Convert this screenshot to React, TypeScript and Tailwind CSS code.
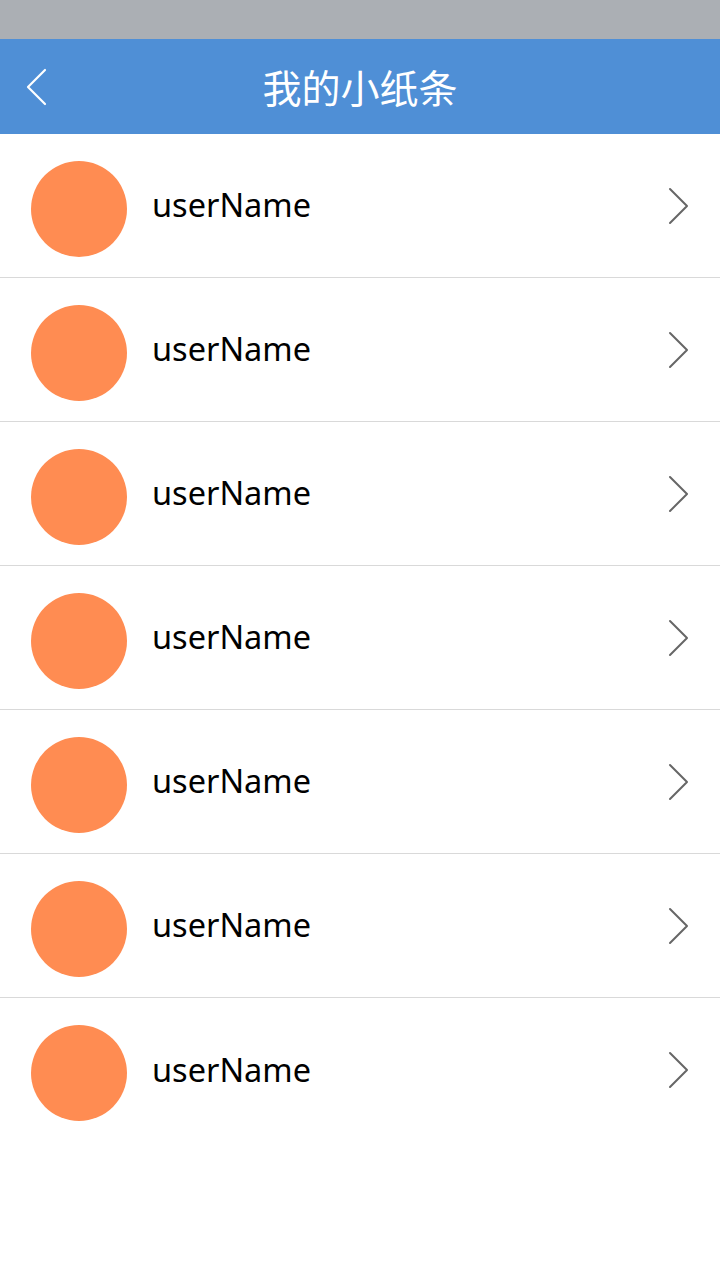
import React from "react";

const rows = Array.from({ length: 7 });

export default function App() {
  return (
    <div className="w-[720px] h-[1280px] bg-white" style={{ fontFamily: '"Noto Sans", "Noto Sans CJK SC", sans-serif' }}>
      <div className="h-[39px] bg-[#abafb4]" />
      <div className="h-[95px] bg-[#4f8fd6] relative flex items-center justify-center">
        <svg className="absolute left-[24px] top-[29px]" width="26" height="38" viewBox="0 0 26 38">
          <polyline points="21,2 4,19 21,36" fill="none" stroke="#fff" strokeWidth="2.2" strokeLinecap="round" strokeLinejoin="round" />
        </svg>
        <span className="text-white text-[39px] leading-none" style={{ fontFamily: '"Noto Sans CJK SC", sans-serif' }}>我的小纸条</span>
      </div>
      <div>
        {rows.map((_, i) => (
          <div key={i} className={`h-[144px] flex items-center ${i < 6 ? "border-b border-[#d9d9d9]" : ""}`}>
            <div className="w-[96px] h-[96px] rounded-full bg-[#ff8c52] ml-[31px] mt-[6px]" />
            <span className="ml-[25px] text-[32.5px] text-black leading-none flex-1">userName</span>
            <svg className="mr-[29px]" width="24" height="38" viewBox="0 0 24 38">
              <polyline points="3,2 20,19 3,36" fill="none" stroke="#666" strokeWidth="2" strokeLinecap="round" strokeLinejoin="round" />
            </svg>
          </div>
        ))}
      </div>
    </div>
  );
}
